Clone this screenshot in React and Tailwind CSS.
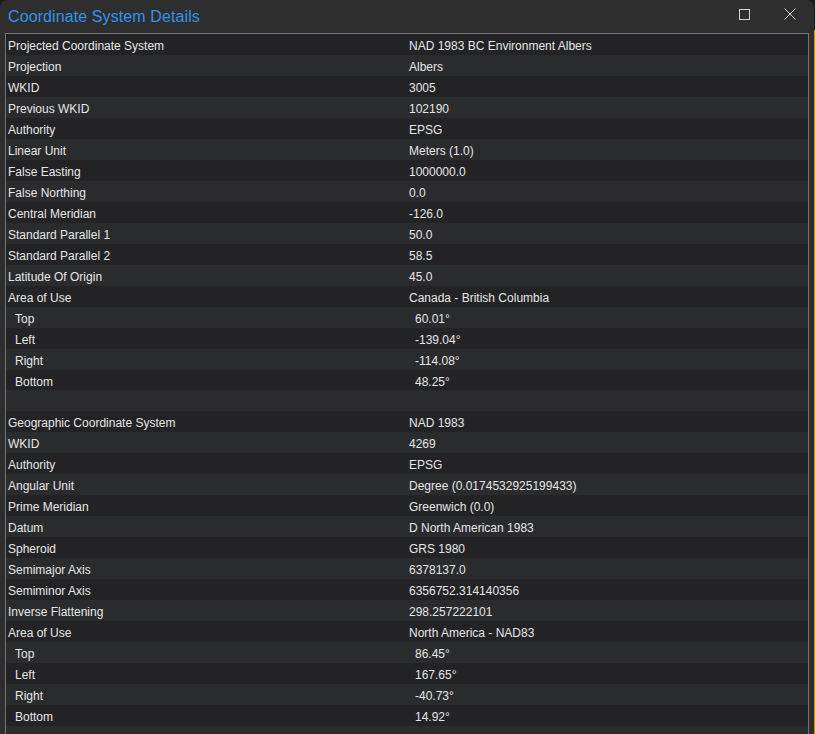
const projected = [
  ["Projected Coordinate System", "NAD 1983 BC Environment Albers"],
  ["Projection", "Albers"],
  ["WKID", "3005"],
  ["Previous WKID", "102190"],
  ["Authority", "EPSG"],
  ["Linear Unit", "Meters (1.0)"],
  ["False Easting", "1000000.0"],
  ["False Northing", "0.0"],
  ["Central Meridian", "-126.0"],
  ["Standard Parallel 1", "50.0"],
  ["Standard Parallel 2", "58.5"],
  ["Latitude Of Origin", "45.0"],
  ["Area of Use", "Canada - British Columbia"],
  ["Top", "60.01°", true],
  ["Left", "-139.04°", true],
  ["Right", "-114.08°", true],
  ["Bottom", "48.25°", true],
];

const geographic = [
  ["Geographic Coordinate System", "NAD 1983"],
  ["WKID", "4269"],
  ["Authority", "EPSG"],
  ["Angular Unit", "Degree (0.0174532925199433)"],
  ["Prime Meridian", "Greenwich (0.0)"],
  ["Datum", "D North American 1983"],
  ["Spheroid", "GRS 1980"],
  ["Semimajor Axis", "6378137.0"],
  ["Semiminor Axis", "6356752.314140356"],
  ["Inverse Flattening", "298.257222101"],
  ["Area of Use", "North America - NAD83"],
  ["Top", "86.45°", true],
  ["Left", "167.65°", true],
  ["Right", "-40.73°", true],
  ["Bottom", "14.92°", true],
];

const rows = [...projected, ["", ""], ...geographic, ["", ""]];

export default function App() {
  return (
    <div className="w-[815px] h-[734px] overflow-hidden bg-[#1b1b1b] flex font-['Liberation_Sans',Arial,sans-serif]">
      <div className="w-[814px] h-full bg-[#2e2e2e] rounded-t-[8px] flex flex-col">
        {/* Title bar */}
        <div className="h-[33px] flex items-start shrink-0">
          <div className="pl-[8px] pt-[5px] text-[16px] text-[#3294ea] tracking-[0.1px]">
            Coordinate System Details
          </div>
          <div className="ml-auto flex items-start">
            <div className="w-[46px] h-[28px] flex items-center justify-center">
              <svg width="11" height="11" viewBox="0 0 11 11">
                <rect x="0.5" y="0.5" width="10" height="10" fill="none" stroke="#d4d4d4" strokeWidth="1" />
              </svg>
            </div>
            <div className="w-[46px] h-[28px] flex items-center justify-center mr-[1px]">
              <svg width="12" height="12" viewBox="0 0 12 12">
                <path d="M0.5 0.5 L11.5 11.5 M11.5 0.5 L0.5 11.5" stroke="#d4d4d4" strokeWidth="1" />
              </svg>
            </div>
          </div>
        </div>

        {/* Table */}
        <div className="ml-[5px] mr-[5px] flex-1 border border-[#757575] border-b-0 overflow-hidden">
          {rows.map((r, i) => (
            <div
              key={i}
              className={`h-[20.97px] flex items-start pt-[5px] leading-[14px] text-[12px] text-[#e6e6e6] ${
                i % 2 === 0 ? "bg-[#232325]" : "bg-[#2a2b2d]"
              }`}
            >
              <div className={`w-[401px] shrink-0 ${r[2] ? "pl-[9px]" : "pl-[2px]"}`}>{r[0]}</div>
              <div className={r[2] ? "pl-[8px]" : "pl-[2px]"}>{r[1]}</div>
            </div>
          ))}
        </div>
      </div>
      <div className="w-[1px] mt-[30px] h-full bg-[#c58d24]" />
    </div>
  );
}
